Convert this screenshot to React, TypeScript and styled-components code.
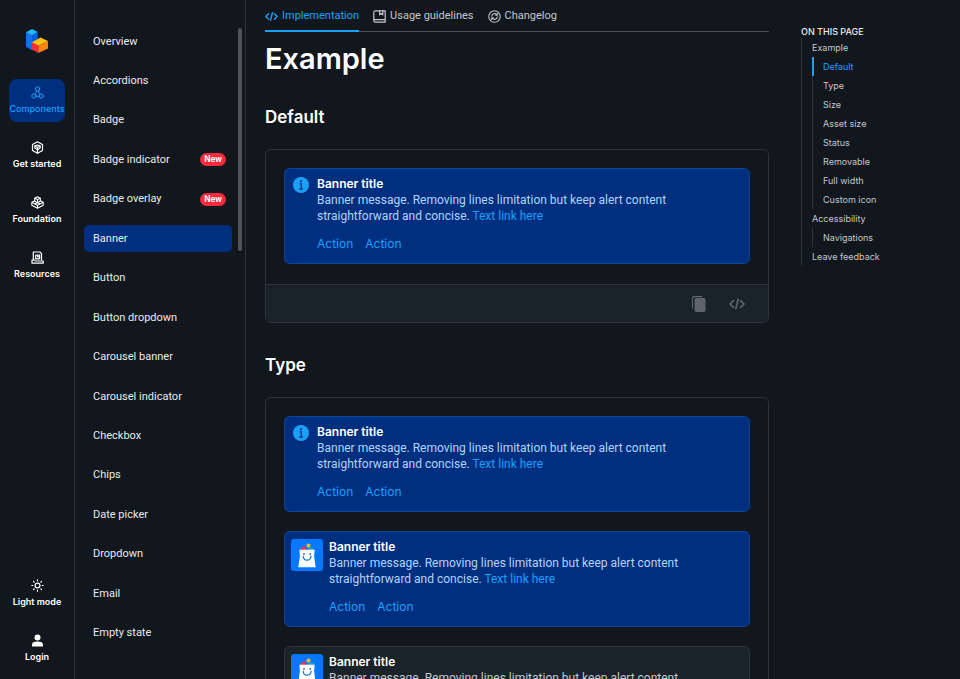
import React from "react";
import styled, { createGlobalStyle } from "styled-components";

const color = {
  bg: "#11171d",
  surface: "#1a222a",
  line: "#2b333b",
  text: "#e8ebee",
  muted: "#c3c8cd",
  blue: "#002f80",
  blueLine: "#0b4696",
  link: "#1ba0fa",
};

const bodyFont = `Roboto, "Liberation Sans", sans-serif`;

const GlobalStyle = createGlobalStyle`
  *, *::before, *::after { box-sizing: border-box; }
  body {
    margin: 0;
    background: ${color.bg};
    color: ${color.text};
    font-family: Inter, "Liberation Sans", sans-serif;
  }
  a { color: inherit; text-decoration: none; }
  button { font: inherit; color: inherit; background: none; border: 0; padding: 0; cursor: pointer; }
  ul { list-style: none; margin: 0; padding: 0; }
  svg { display: block; flex: none; }
`;

const Page = styled.div`
  display: grid;
  grid-template-columns: 75px 171px minmax(0, 1fr);
  height: 100vh;
  overflow: hidden;
`;

const Rail = styled.nav`
  display: flex;
  flex-direction: column;
  align-items: center;
  gap: 12px;
  padding: 28px 0 9px;
  border-right: 1px solid ${color.line};
`;

const LogoLink = styled.a`
  margin-bottom: 13px;
`;

const Spacer = styled.div`
  flex: 1;
`;

const railItem = `
  display: flex;
  flex-direction: column;
  align-items: center;
  justify-content: center;
  gap: 4px;
  width: 56px;
  height: 43px;
  border-radius: 8px;
  font-size: 9px;
  line-height: 12px;
  font-weight: 600;
  white-space: nowrap;
`;

const RailLink = styled.a<{ $active?: boolean }>`
  ${railItem}
  color: ${(p) => (p.$active ? color.link : "#fff")};
  font-weight: ${(p) => (p.$active ? 500 : 600)};
  background: ${(p) => (p.$active ? color.blue : "transparent")};
`;

const RailButton = styled.button`
  &&& {
    ${railItem}
    color: #fff;
  }
`;

const SideNav = styled.nav`
  display: flex;
  border-right: 1px solid ${color.line};
  padding-right: 3px;
  min-height: 0;
`;

const NavList = styled.ul`
  flex: 1;
  display: flex;
  flex-direction: column;
  justify-content: space-between;
  gap: 12px;
  && { padding: 28px 6px 32px 9px; }
`;

const NavLink = styled.a<{ $active?: boolean }>`
  display: flex;
  align-items: center;
  justify-content: space-between;
  height: 27px;
  padding: 0 6px 0 9px;
  border-radius: 5px;
  font-family: ${bodyFont};
  font-size: 11px;
  line-height: 16px;
  background: ${(p) => (p.$active ? color.blue : "transparent")};
`;

const NewBadge = styled.span`
  padding: 0 4px;
  border-radius: 7px;
  background: #fa2a3d;
  color: #fff;
  font-size: 9px;
  line-height: 13px;
  font-weight: 600;
`;

const ScrollThumb = styled.div`
  width: 4px;
  height: 223px;
  margin-top: 28px;
  border-radius: 2px;
  background: #4d5359;
`;

const Content = styled.div`
  display: grid;
  grid-template-columns: minmax(0, 1fr) 159px;
  gap: 32px;
  padding-left: 19px;
  min-height: 0;
`;

const Main = styled.main`
  min-width: 0;
  min-height: 0;
  overflow: hidden;
`;

const Tabs = styled.div`
  display: flex;
  gap: 14px;
  height: 32px;
  box-shadow: inset 0 -1px #4b5258;
`;

const Tab = styled.button<{ $active?: boolean }>`
  && {
    display: flex;
    align-items: center;
    gap: 4px;
    font-family: ${bodyFont};
    font-size: 11px;
    line-height: 16px;
    white-space: nowrap;
    color: ${(p) => (p.$active ? color.link : color.muted)};
    border-bottom: 2px solid ${(p) => (p.$active ? color.link : "transparent")};
    padding-top: 2px;
  }
`;

const Title = styled.h1`
  margin: 8px 0 0;
  font-size: 29px;
  line-height: 38px;
  font-weight: 600;
  color: #fff;
`;

const Heading = styled.h2<{ $spaced?: boolean }>`
  margin: ${(p) => (p.$spaced ? "30px" : "27px")} 0 20px;
  font-size: 17px;
  line-height: 24px;
  font-weight: 600;
  color: #fff;
`;

const Card = styled.section`
  border: 1px solid ${color.line};
  border-radius: 6px;
  overflow: hidden;
`;

const Stack = styled.div`
  display: flex;
  flex-direction: column;
  gap: 19px;
  padding: 18px 18px 20px;
`;

const CardFooter = styled.footer`
  display: flex;
  justify-content: flex-end;
  align-items: center;
  gap: 22px;
  height: 38px;
  padding: 0 23px;
  border-top: 1px solid ${color.line};
  background: ${color.surface};
  color: #5d646b;
`;

const BannerBox = styled.article<{ $neutral?: boolean }>`
  display: flex;
  gap: 6px;
  padding: 7px 6px 11px;
  border: 1px solid ${(p) => (p.$neutral ? color.line : color.blueLine)};
  border-radius: 6px;
  background: ${(p) => (p.$neutral ? color.surface : color.blue)};
  font-size: 12px;
  line-height: 16px;
`;

const IconSlot = styled.div`
  width: 20px;
  padding-left: 2px;
`;

const BannerTitle = styled.h3`
  margin: 0;
  font-size: 12px;
  line-height: 16px;
  font-weight: 600;
  color: #fff;
`;

const BannerBody = styled.div`
  max-width: 366px;
`;

const Message = styled.p<{ $neutral?: boolean }>`
  margin: 0;
  font-family: ${bodyFont};
  color: ${(p) => (p.$neutral ? color.muted : "#b5d3f8")};
`;

const TextLink = styled.a`
  && { color: ${color.link}; }
`;

const Actions = styled.div`
  display: flex;
  gap: 12px;
  margin-top: 12px;
`;

const Action = styled.button`
  && { color: ${color.link}; }
`;

const Toc = styled.aside`
  padding-top: 26px;
  font-size: 9px;
`;

const TocTitle = styled.h4`
  margin: 0;
  font-size: 9px;
  line-height: 12px;
  font-weight: 500;
  color: ${color.text};
`;

const TocList = styled.ul`
  border-left: 1px solid ${color.line};
`;

const TocLink = styled.a<{ $active?: boolean }>`
  display: block;
  padding-left: 10px;
  line-height: 19px;
  color: ${(p) => (p.$active ? color.link : color.muted)};
  box-shadow: ${(p) => (p.$active ? `inset 1px 0 ${color.link}, -1px 0 ${color.link}` : "none")};
`;

const TocSub = styled(TocList)`
  && { margin-left: 10px; }
`;

const stroke = {
  fill: "none",
  stroke: "currentColor",
  strokeWidth: 1.2,
  strokeLinecap: "round" as const,
  strokeLinejoin: "round" as const,
};

const Logo = () => (
  <svg width="24" height="26" viewBox="0 0 24 26">
    <path d="M1 4.200 7 7v15.200l-6-3.400z" fill="#0a72f5" />
    <path d="M7 7l5.800-2.800v12L7 22.200z" fill="#0560e0" />
    <path d="M7 1l5.800 3.100L7 7.200 1 4.200z" fill="#18b8fb" />
    <path d="M7 14.200 13.400 17.600V25L7 21.400z" fill="#fb2e35" />
    <path d="M13.400 17.600 23 13v7.400L13.400 25z" fill="#fd8413" />
    <path d="M7 14.200 15.500 9.600 23 13l-9.600 4.600z" fill="#ffc20c" />
  </svg>
);

const ComponentsIcon = () => (
  <svg width="13" height="13" viewBox="0 0 13 13" {...stroke} strokeWidth={1}>
    <circle cx="6.500" cy="3" r="2.100" />
    <circle cx="2.800" cy="10" r="2.100" />
    <circle cx="10.200" cy="10" r="2.100" />
    <path d="M5.300 4.800v1.600L3.800 8M7.700 4.800v1.600L9.200 8M4.900 10.200h3.200" />
  </svg>
);

const CubeIcon = () => (
  <svg width="13" height="13" viewBox="0 0 13 13" {...stroke}>
    <path d="M6.500.8 11.500 3.600v5.800l-5 2.800-5-2.800V3.600z" />
    <path d="M3.800 4.900 6.500 4l2.700.9M3.800 4.900v2L6.500 9l2.700-2.100v-2L6.500 6.400zM6.500 6.400V12" />
  </svg>
);

const FoundationIcon = () => (
  <svg width="13" height="13" viewBox="0 0 13 13" {...stroke} strokeWidth={1.1}>
    <path d="M6.500.7 9.300 2.200v3L6.500 6.700 3.700 5.200v-3z" />
    <path d="M3.700 2.200 6.500 3.600l2.800-1.400M6.500 3.600v3" />
    <path d="M3.700 4.800.8 6.300v2.900l5.700 3.100 5.700-3.100V6.300L9.300 4.800M.8 6.300l5.700 3 5.700-3M6.500 9.300v3M3.700 7.800 6.500 6.700l2.800 1.100" />
  </svg>
);

const ResourcesIcon = () => (
  <svg width="13" height="13" viewBox="0 0 13 13" {...stroke}>
    <path d="M2.300 9V1h6.600l1.600 1.600V9" />
    <path d="M1 9h2.600l.8 1h7.800v2.200H1z" />
    <path d="M8.600 4H4.700v3.800h3.900M8.600 4v3.800M6.800 4v1.900h1.800" />
  </svg>
);

const SunIcon = () => (
  <svg width="13" height="13" viewBox="0 0 13 13" {...stroke}>
    <circle cx="6.500" cy="6.500" r="2.400" />
    <path d="M6.500.8v1M6.500 11.200v1M.8 6.500h1M11.200 6.500h1M2.500 2.500l.7.7M9.800 9.800l.7.7M2.500 10.500l.7-.7M9.800 3.200l.7-.7" />
  </svg>
);

const UserIcon = () => (
  <svg width="13" height="13" viewBox="0 0 13 13" fill="currentColor">
    <circle cx="6.500" cy="3.600" r="3" />
    <path d="M1 12.400v-1.600C1 8.600 3 7.600 6.500 7.600s5.500 1 5.500 3.200v1.600z" />
  </svg>
);

const CodeIcon = ({ size = 13 }: { size?: number }) => (
  <svg width={size} height={size} viewBox="0 0 13 13" {...stroke} strokeWidth={1.4}>
    <path d="M3.600 3.700.8 6.500l2.800 2.800M9.400 3.700l2.800 2.800-2.800 2.800M7.400 2.800 5.600 10.200" />
  </svg>
);

const BookIcon = () => (
  <svg width="13" height="13" viewBox="0 0 13 13" {...stroke}>
    <path d="M12.200 9.600V.8H2.200Q.8.800.8 2.200v8.600q0 1.400 1.400 1.400h10V9.600H2.300Q.8 9.600.8 10.800" />
    <path d="M6.600.8v4l1.600-1.200 1.600 1.200v-4" />
  </svg>
);

const ChangeIcon = () => (
  <svg width="13" height="13" viewBox="0 0 13 13" {...stroke} strokeWidth={1.1}>
    <circle cx="6.500" cy="6.500" r="5.700" />
    <path d="M3.700 6.100a2.900 2.900 0 0 1 5-1.500l.6.600V3.500M9.300 6.900a2.900 2.900 0 0 1-5 1.500l-.6-.6v1.700M9.300 5.200H7.700M3.700 7.800h1.600" />
  </svg>
);

const CopyIcon = () => (
  <svg width="16" height="16" viewBox="0 0 16 16" fill="currentColor">
    <path d="M2.800 0h8.400v1.200H3.600A1.600 1.600 0 0 0 2 2.800V13a1.800 1.800 0 0 1-1-1.600V1.800A1.800 1.800 0 0 1 2.800 0z" />
    <rect x="3.500" y="2" width="11" height="14" rx="1.800" />
  </svg>
);

const InfoIcon = () => (
  <svg width="16" height="18" viewBox="0 0 16 18">
    <circle cx="8" cy="9" r="8" fill="#1ba0fa" />
    <circle cx="8" cy="5.300" r="1.100" fill={color.blue} />
    <path d="M6.500 7.800H8.300v5M6.400 13h3.400" fill="none" stroke={color.blue} strokeWidth="1.300" />
  </svg>
);

const BagAvatar = () => (
  <svg width="32" height="32" viewBox="0 0 32 32">
    <rect width="32" height="32" rx="3" fill="#0578fb" />
    <path d="M9 11.500q-.2-2.500 2-2.700.6-2 3-1.500l2 4.200z" fill="#e33b62" />
    <path d="M15.500 11.500 19 8.200l3.300 1v2.300z" fill="#20a9c4" />
    <circle cx="17.500" cy="6.600" r="2.100" fill="#e8bd35" />
    <path d="M8.400 10.800h15.300l-.6 6.200 1.500 11.200H7.300L8.900 17z" fill="#fff" />
    <path d="M12.200 17.200q.3 3.900 3.900 3.900t3.900-3.900" fill="none" stroke="#0870dc" strokeWidth="1.200" strokeLinecap="round" />
    <circle cx="13" cy="14.900" r=".8" fill="#0a3a7c" />
    <circle cx="19.200" cy="14.900" r=".8" fill="#0a3a7c" />
  </svg>
);

interface BannerProps {
  avatar?: boolean;
  neutral?: boolean;
}

const Banner = ({ avatar, neutral }: BannerProps) => (
  <BannerBox $neutral={neutral}>
    {avatar ? <BagAvatar /> : <IconSlot><InfoIcon /></IconSlot>}
    <BannerBody>
      <BannerTitle>Banner title</BannerTitle>
      <Message $neutral={neutral}>
        Banner message. Removing lines limitation but keep alert content straightforward and concise.{" "}
        <TextLink href="#link">Text link here</TextLink>
      </Message>
      <Actions>
        <Action type="button">Action</Action>
        <Action type="button">Action</Action>
      </Actions>
    </BannerBody>
  </BannerBox>
);

const railLinks = [
  { label: "Components", icon: <ComponentsIcon />, active: true },
  { label: "Get started", icon: <CubeIcon /> },
  { label: "Foundation", icon: <FoundationIcon /> },
  { label: "Resources", icon: <ResourcesIcon /> },
];

const navItems = [
  "Overview", "Accordions", "Badge", "Badge indicator", "Badge overlay", "Banner",
  "Button", "Button dropdown", "Carousel banner", "Carousel indicator", "Checkbox",
  "Chips", "Date picker", "Dropdown", "Email", "Empty state",
];
const newItems = ["Badge indicator", "Badge overlay"];

const exampleSections = [
  "Default", "Type", "Size", "Asset size", "Status", "Removable", "Full width", "Custom icon",
];

export default function App() {
  return (
    <>
      <GlobalStyle />
      <Page>
        <Rail aria-label="Primary">
          <LogoLink href="#home" aria-label="Home"><Logo /></LogoLink>
          {railLinks.map((r) => (
            <RailLink key={r.label} href="#section" $active={r.active}>
              {r.icon}
              {r.label}
            </RailLink>
          ))}
          <Spacer />
          <RailButton type="button"><SunIcon />Light mode</RailButton>
          <RailButton type="button"><UserIcon />Login</RailButton>
        </Rail>

        <SideNav aria-label="Components">
          <NavList>
            {navItems.map((item) => (
              <li key={item}>
                <NavLink href="#component" $active={item === "Banner"}>
                  {item}
                  {newItems.includes(item) && <NewBadge>New</NewBadge>}
                </NavLink>
              </li>
            ))}
          </NavList>
          <ScrollThumb />
        </SideNav>

        <Content>
          <Main>
            <Tabs role="tablist">
              <Tab type="button" role="tab" aria-selected $active><CodeIcon />Implementation</Tab>
              <Tab type="button" role="tab" aria-selected={false}><BookIcon />Usage guidelines</Tab>
              <Tab type="button" role="tab" aria-selected={false}><ChangeIcon />Changelog</Tab>
            </Tabs>
            <Title>Example</Title>
            <Heading>Default</Heading>
            <Card>
              <Stack><Banner /></Stack>
              <CardFooter>
                <button type="button" aria-label="Copy code"><CopyIcon /></button>
                <button type="button" aria-label="Show code"><CodeIcon size={16} /></button>
              </CardFooter>
            </Card>
            <Heading $spaced>Type</Heading>
            <Card>
              <Stack>
                <Banner />
                <Banner avatar />
                <Banner avatar neutral />
              </Stack>
            </Card>
          </Main>

          <Toc>
            <TocTitle>ON THIS PAGE</TocTitle>
            <TocList>
              <li>
                <TocLink href="#example">Example</TocLink>
                <TocSub>
                  {exampleSections.map((s) => (
                    <li key={s}><TocLink href="#example" $active={s === "Default"}>{s}</TocLink></li>
                  ))}
                </TocSub>
              </li>
              <li>
                <TocLink href="#accessibility">Accessibility</TocLink>
                <TocSub>
                  <li><TocLink href="#navigations">Navigations</TocLink></li>
                </TocSub>
              </li>
              <li><TocLink href="#feedback">Leave feedback</TocLink></li>
            </TocList>
          </Toc>
        </Content>
      </Page>
    </>
  );
}
